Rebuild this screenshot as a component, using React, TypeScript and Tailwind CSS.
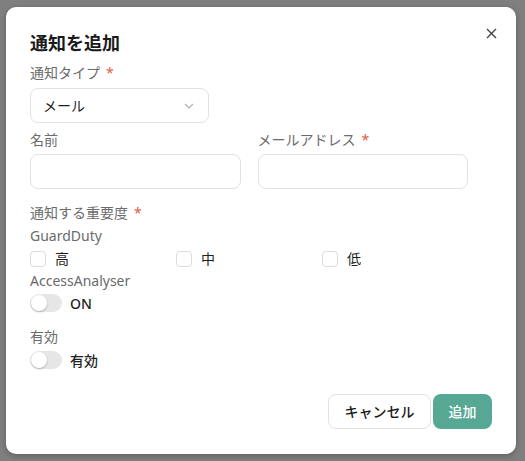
import React from "react";

const Req = () => <span className="ml-[6px] text-[#e0603f]">*</span>;

function Checkbox({ label }: { label: string }) {
  return (
    <div className="flex items-center">
      <span className="w-[16px] h-[16px] rounded-[4px] border border-[#dcdcdc] bg-white" />
      <span className="ml-[9px] text-[14px] text-[#1f1f1f]">{label}</span>
    </div>
  );
}

function Switch({ label }: { label: string }) {
  return (
    <div className="flex items-center h-[20px]">
      <span className="relative w-[32px] h-[18px] rounded-full bg-[#e6e6e6]">
        <span className="absolute left-[1px] top-[1px] w-[16px] h-[16px] rounded-full bg-white shadow-[0_1px_2px_rgba(0,0,0,0.25)]" />
      </span>
      <span className="ml-[8px] text-[14px] text-[#1f1f1f] font-medium">{label}</span>
    </div>
  );
}

export default function App() {
  return (
    <div
      className="min-h-screen bg-[#7f7f7f] pt-[7px] pl-[6px]"
      style={{ fontFamily: '"Noto Sans", "Noto Sans CJK JP", sans-serif' }}
    >
      <div className="relative w-[510px] h-[447px] bg-white rounded-[10px] shadow-[0_2px_6px_rgba(0,0,0,0.25)] pl-[24px] pr-[48px] pt-[24px] flex flex-col">
        <button className="absolute right-[19px] top-[20px] w-[12px] h-[12px] flex items-center justify-center text-[#444]">
          <svg width="11" height="11" viewBox="0 0 11 11" fill="none" stroke="currentColor" strokeWidth="1.4">
            <path d="M1 1 L10 10 M10 1 L1 10" />
          </svg>
        </button>
        <div className="text-[18px] leading-[24px] font-bold text-[#1a1a1a]">通知を追加</div>

        <div className="mt-[8px] text-[14px] leading-[20px] text-[#6b6b6b]">
          通知タイプ
          <Req />
        </div>
        <div className="mt-[5px] w-[179px] h-[35px] rounded-[8px] border border-[#e2e2e2] flex items-center justify-between pl-[12px] pr-[14px]">
          <span className="text-[14px] text-[#1f1f1f]">メール</span>
          <svg width="10" height="6" viewBox="0 0 10 6" fill="none" stroke="#b0b0b0" strokeWidth="1.1">
            <path d="M1 1 L5 5 L9 1" />
          </svg>
        </div>

        <div className="mt-[7px] grid grid-cols-2 gap-x-[17px]">
          <div>
            <div className="text-[14px] leading-[20px] text-[#6b6b6b]">名前</div>
            <div className="mt-[4px] h-[35px] rounded-[8px] border border-[#e2e2e2]" />
          </div>
          <div>
            <div className="text-[14px] leading-[20px] text-[#6b6b6b]">
              メールアドレス
              <Req />
            </div>
            <div className="mt-[4px] h-[35px] rounded-[8px] border border-[#e2e2e2]" />
          </div>
        </div>

        <div className="mt-[14px] text-[14px] leading-[20px] text-[#6b6b6b]">
          通知する重要度
          <Req />
        </div>
        <div className="mt-[3px] text-[14px] leading-[20px] text-[#6b6b6b]">GuardDuty</div>
        <div className="mt-[2px] grid grid-cols-3 h-[20px]">
          <Checkbox label="高" />
          <Checkbox label="中" />
          <Checkbox label="低" />
        </div>
        <div className="mt-[3px] text-[14px] leading-[20px] text-[#6b6b6b]">AccessAnalyser</div>
        <div className="mt-[2px]">
          <Switch label="ON" />
        </div>

        <div className="mt-[14px] text-[14px] leading-[20px] text-[#6b6b6b]">有効</div>
        <div className="mt-[3px]">
          <Switch label="有効" />
        </div>

        <div className="mt-[24px] flex justify-end gap-[2px] -mr-[24px]">
          <button className="h-[35px] w-[103px] rounded-[8px] border border-[#e2e2e2] bg-white text-[14px] font-medium text-[#1a1a1a]">
            キャンセル
          </button>
          <button className="h-[35px] w-[59px] rounded-[8px] bg-[#56a894] text-[14px] font-medium text-white">
            追加
          </button>
        </div>
      </div>
    </div>
  );
}
